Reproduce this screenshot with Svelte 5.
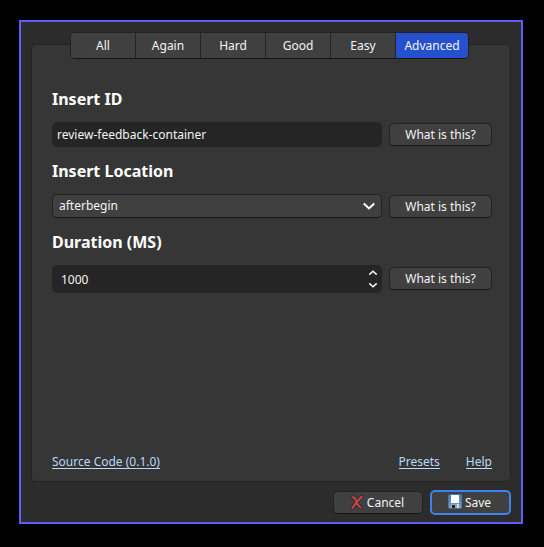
<script>
  const tabs = ['All', 'Again', 'Hard', 'Good', 'Easy', 'Advanced'];
  let active = $state('Advanced');
  let insertId = $state('review-feedback-container');
</script>

<main>
  <div class="window">
    <nav class="tabs">
      {#each tabs as tab}
        <button class="tab" class:active={tab === active} onclick={() => (active = tab)}>{tab}</button>
      {/each}
    </nav>

    <section class="panel">
      <h2>Insert ID</h2>
      <div class="row first">
        <input class="field" bind:value={insertId} />
        <button class="btn help">What is this?</button>
      </div>

      <h2>Insert Location</h2>
      <div class="row second">
        <div class="select">
          <span>afterbegin</span>
          <svg width="14" height="10" viewBox="0 0 14 10"><path d="M1.8 2.4 L7 7.4 L12.2 2.4" fill="none" stroke="#fff" stroke-width="2.1" /></svg>
        </div>
        <button class="btn help">What is this?</button>
      </div>

      <h2>Duration (MS)</h2>
      <div class="row third">
        <div class="spin">
          <span>1000</span>
          <svg width="10" height="20" viewBox="0 0 10 20"><path d="M1.3 5.6 L5 2.2 L8.7 5.6 M1.3 14.4 L5 17.8 L8.7 14.4" fill="none" stroke="#f4f4f4" stroke-width="1.5" /></svg>
        </div>
        <button class="btn help">What is this?</button>
      </div>

      <footer class="links">
        <a href="#source">Source Code (0.1.0)</a>
        <a class="presets" href="#presets">Presets</a>
        <a href="#help">Help</a>
      </footer>
    </section>

    <div class="actions">
      <button class="btn cancel">
        <svg width="14" height="16" viewBox="0 0 14 16">
          <path d="M2.6 2.5 Q4.6 1.8 5.5 4.6 Q7.2 9.6 10.4 12.6 M11.6 1.9 Q6.6 6.3 2.4 13" fill="none" stroke="#401f22" stroke-width="3.6" stroke-linecap="round" />
          <path d="M2.6 2.5 Q4.6 1.8 5.5 4.6 Q7.2 9.6 10.4 12.6 M11.6 1.9 Q6.6 6.3 2.4 13" fill="none" stroke="#be4850" stroke-width="2.1" stroke-linecap="round" />
        </svg>
        <span>Cancel</span>
      </button>
      <button class="btn save">
        <svg width="14" height="15" viewBox="0 0 14 15">
          <defs><linearGradient id="disk" x1="0" y1="0" x2="0" y2="1"><stop offset="0" stop-color="#4677ad" /><stop offset="1" stop-color="#7da5d0" /></linearGradient></defs>
          <path d="M1 .5 H13 L13.5 1 V14 L13 14.5 H1.5 L.5 13.5 V1 Z" fill="url(#disk)" stroke="#4474a8" />
          <rect x="3" y="1" width="8" height="8" fill="#fff" />
          <rect x="3" y="10" width="8" height="4" fill="#9ca8aa" />
          <rect x="4" y="11" width="3" height="3" fill="#20272b" />
          <rect x="9" y="10" width="2" height="4" fill="#cdd5d8" />
        </svg>
        <span>Save</span>
      </button>
    </div>
  </div>
</main>

<style>
  :global(body) { background: #000; }
  main {
    box-sizing: border-box;
    width: 544px;
    height: 547px;
    padding: 20px 21px 23px 19px;
    background: #000;
    color: #f4f4f4;
    font: 12px/16px "Noto Sans", sans-serif;
  }
  main * { box-sizing: border-box; }
  button, input { margin: 0; padding: 0; font: inherit; color: inherit; }
  svg { display: block; flex: none; }
  .window {
    height: 504px;
    padding: 10px 10px 7px;
    border: 2px solid #5c5cff;
    background: #2c2c2c;
    display: flex;
    flex-direction: column;
  }
  .tabs {
    z-index: 1;
    flex: none;
    display: flex;
    width: 399px;
    height: 27px;
    margin: 0 auto -15px 39px;
    border: 1px solid #222;
    border-bottom-color: #151515;
    border-radius: 5px;
    overflow: hidden;
    background: #404040;
  }
  .tab {
    width: 65px;
    padding-top: 1px;
    border: 0;
    border-right: 1px solid #252525;
    background: #404040;
  }
  .tab.active { flex: 1; border: 0; background: #2551cf; }
  .panel {
    flex: none;
    height: 438px;
    padding: 43px 18px 0 20px;
    border: 1px solid #242424;
    border-radius: 5px;
    background: #363636;
    display: flex;
    flex-direction: column;
  }
  h2 {
    margin: 0;
    height: 22px;
    color: #fff;
    font-size: 16px;
    line-height: 22px;
    font-weight: 700;
  }
  .row { display: flex; align-items: center; }
  .row.first { height: 25px; margin: 12px 0 13px; }
  .row.second { height: 24px; margin: 12px 0 13px; align-items: flex-end; }
  .row.third { height: 28px; margin: 12px 0 0; align-items: flex-start; }
  .field, .spin {
    width: 330px;
    border: 0;
    border-radius: 5px;
    background: #252525;
    outline: 0;
  }
  .field { height: 25px; padding: 0 5px; }
  .spin {
    height: 28px;
    padding: 0 4px 0 9px;
    display: flex;
    align-items: center;
    justify-content: space-between;
  }
  .spin span { padding-top: 2px; }
  .select {
    width: 330px;
    height: 24px;
    padding: 0 5px 0 6px;
    border: 1px solid #222;
    border-bottom-color: #151515;
    border-radius: 5px;
    background: #404040;
    display: flex;
    align-items: center;
    justify-content: space-between;
  }
  .btn {
    height: 23px;
    border: 1px solid #222;
    border-bottom-color: #151515;
    border-radius: 5px;
    background: #404040;
    display: flex;
    align-items: center;
    justify-content: center;
  }
  .help { width: 103px; margin-left: 7px; padding-top: 1px; }
  .third .help { margin-top: 2px; }
  .links {
    margin: auto 0 0;
    height: 28px;
    display: flex;
    gap: 26px;
  }
  .links a {
    height: 16px;
    line-height: 18px;
    color: #b9d9fb;
    text-decoration: none;
    border-bottom: 1px solid #b9d9fb;
  }
  .presets { margin-left: auto; }
  .actions {
    flex: none;
    display: flex;
    justify-content: flex-end;
    align-items: center;
    gap: 7px;
    height: 25px;
    margin-top: 8px;
  }
  .cancel { width: 90px; gap: 3px; padding-right: 2px; }
  .save { width: 81px; height: 25px; gap: 3px; padding-right: 2px; border: 2px solid #3d83ee; }
  .save svg { margin-bottom: 2px; }
</style>
